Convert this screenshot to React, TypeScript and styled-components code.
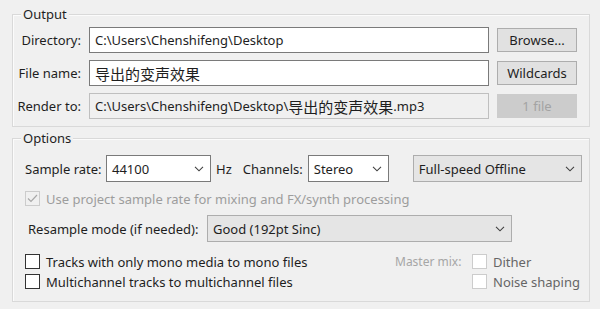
import React from 'react'
import styled, { createGlobalStyle } from 'styled-components'

const GlobalStyle = createGlobalStyle`
  html, body {
    margin: 0;
    background: #f0f0f0;
    font-family: "Noto Sans", "Noto Sans CJK SC", sans-serif;
    font-size: 13px;
    color: #1e1e1e;
  }
`

const Page = styled.div`
  width: 600px;
  height: 309px;
  box-sizing: border-box;
  padding: 14px 10px 0 12px;
  display: flex;
  flex-direction: column;
  gap: 11px;
`

const Group = styled.div<{ $pad: string }>`
  position: relative;
  border: 1px solid #d9d9d9;
  box-shadow: inset 1px 1px 0 #fbfbfb;
  padding: ${p => p.$pad};
`

const Legend = styled.span`
  position: absolute;
  top: -10px;
  left: 8px;
  padding: 0 2px;
  background: #f0f0f0;
  line-height: 18px;
`

const OutputGrid = styled.div`
  display: grid;
  grid-template-columns: 64px 400px 80px;
  column-gap: 8px;
  row-gap: 7px;
  align-items: center;
`

const FieldLabel = styled.label`
  text-align: right;
  white-space: nowrap;
`

const TextBox = styled.div<{ $disabled?: boolean }>`
  height: 26px;
  box-sizing: border-box;
  border: 1px solid ${p => (p.$disabled ? '#bfbfbf' : '#7a7a7a')};
  background: ${p => (p.$disabled ? '#f0f0f0' : '#ffffff')};
  padding: 0 5px;
  display: flex;
  align-items: center;
  white-space: nowrap;
  overflow: hidden;
`

const Cjk = styled.span`
  font-family: "Noto Sans CJK SC", sans-serif;
  font-size: 15px;
`

const Button = styled.div<{ $disabled?: boolean }>`
  height: 24px;
  box-sizing: border-box;
  border: 1px solid ${p => (p.$disabled ? '#cccccc' : '#adadad')};
  background: ${p => (p.$disabled ? '#cccccc' : '#e1e1e1')};
  color: ${p => (p.$disabled ? '#a3a3a3' : '#1e1e1e')};
  display: flex;
  align-items: center;
  justify-content: center;
`

const Row = styled.div<{ $top?: number }>`
  display: flex;
  align-items: center;
  margin-top: ${p => p.$top ?? 0}px;
`

const InlineLabel = styled.span<{ $w?: number; $ml?: number }>`
  ${p => (p.$w ? `width: ${p.$w}px; flex: none;` : '')}
  margin-left: ${p => p.$ml ?? 0}px;
  white-space: nowrap;
`

const SelectBox = styled.div<{ $w: number; $ml?: number; $flat?: boolean }>`
  width: ${p => p.$w}px;
  flex: none;
  margin-left: ${p => p.$ml ?? 0}px;
  height: 27px;
  box-sizing: border-box;
  border: 1px solid ${p => (p.$flat ? '#adadad' : '#7a7a7a')};
  background: ${p => (p.$flat ? '#e5e5e5' : '#ffffff')};
  padding: 0 6px 0 5px;
  display: flex;
  align-items: center;
  justify-content: space-between;
  white-space: nowrap;
`

const Chevron = () => (
  <svg width="10" height="6" viewBox="0 0 10 6">
    <polyline points="1,0.8 5,4.8 9,0.8" fill="none" stroke="#404040" strokeWidth="1.1" />
  </svg>
)

const Select: React.FC<{ w: number; ml?: number; flat?: boolean; children: React.ReactNode }> = ({ w, ml, flat, children }) => (
  <SelectBox $w={w} $ml={ml} $flat={flat}>
    <span>{children}</span>
    <Chevron />
  </SelectBox>
)

type CheckState = 'off' | 'disabled' | 'disabledOn'

const CheckRow = styled.div<{ $tone?: string }>`
  display: flex;
  align-items: center;
  gap: 6px;
  height: 15px;
  white-space: nowrap;
  color: ${p => p.$tone ?? 'inherit'};
`

const Box = styled.div<{ $state: CheckState }>`
  width: 15px;
  height: 15px;
  box-sizing: border-box;
  flex: none;
  border: 1px solid ${p => (p.$state === 'off' ? '#333333' : '#cccccc')};
  background: ${p => (p.$state === 'disabledOn' ? '#f0f0f0' : '#ffffff')};
  display: flex;
  align-items: center;
  justify-content: center;
`

const Check: React.FC<{ state: CheckState }> = ({ state }) => (
  <Box $state={state}>
    {state === 'disabledOn' && (
      <svg width="11" height="9" viewBox="0 0 11 9">
        <polyline points="1,4.5 4,7.5 10,1" fill="none" stroke="#a8a8a8" strokeWidth="1.2" />
      </svg>
    )}
  </Box>
)

const Bottom = styled.div`
  display: flex;
  margin-top: 12px;
`

const CheckList = styled.div<{ $w?: number }>`
  display: flex;
  flex-direction: column;
  gap: 5px;
  ${p => (p.$w ? `width: ${p.$w}px; flex: none;` : '')}
`

const MasterMix = styled.div`
  display: flex;
  gap: 10px;
`

const MixLabel = styled.span`
  width: 67px;
  flex: none;
  white-space: nowrap;
  font-size: 12px;
  color: #a6a6a6;
  line-height: 15px;
`

export default function App() {
  return (
    <>
      <GlobalStyle />
      <Page>
        <Group $pad="12px 11px 7px 4px">
          <Legend>Output</Legend>
          <OutputGrid>
            <FieldLabel>Directory:</FieldLabel>
            <TextBox>C:\Users\Chenshifeng\Desktop</TextBox>
            <Button>Browse...</Button>

            <FieldLabel>File name:</FieldLabel>
            <TextBox><Cjk>导出的变声效果</Cjk></TextBox>
            <Button>Wildcards</Button>

            <FieldLabel>Render to:</FieldLabel>
            <TextBox $disabled>
              C:\Users\Chenshifeng\Desktop\<Cjk>导出的变声效果</Cjk>.mp3
            </TextBox>
            <Button $disabled>1 file</Button>
          </OutputGrid>
        </Group>

        <Group $pad="16px 6px 12px 12px">
          <Legend>Options</Legend>
          <Row>
            <InlineLabel $w={81}>Sample rate:</InlineLabel>
            <Select w={105}>44100</Select>
            <InlineLabel $ml={5}>Hz</InlineLabel>
            <InlineLabel $ml={11} $w={65}>Channels:</InlineLabel>
            <Select w={81}>Stereo</Select>
            <Select w={169} ml={24} flat>Full-speed Offline</Select>
          </Row>

          <Row $top={9}>
            <CheckRow $tone="#9d9d9d">
              <Check state="disabledOn" />
              Use project sample rate for mixing and FX/synth processing
            </CheckRow>
          </Row>

          <Row $top={9}>
            <InlineLabel $w={179} $ml={3}>Resample mode (if needed):</InlineLabel>
            <Select w={305} flat>Good (192pt Sinc)</Select>
          </Row>

          <Bottom>
            <CheckList $w={370}>
              <CheckRow>
                <Check state="off" />
                Tracks with only mono media to mono files
              </CheckRow>
              <CheckRow>
                <Check state="off" />
                Multichannel tracks to multichannel files
              </CheckRow>
            </CheckList>
            <MasterMix>
              <MixLabel>Master mix:</MixLabel>
              <CheckList>
                <CheckRow $tone="#666666">
                  <Check state="disabled" />
                  Dither
                </CheckRow>
                <CheckRow $tone="#666666">
                  <Check state="disabled" />
                  Noise shaping
                </CheckRow>
              </CheckList>
            </MasterMix>
          </Bottom>
        </Group>
      </Page>
    </>
  )
}
